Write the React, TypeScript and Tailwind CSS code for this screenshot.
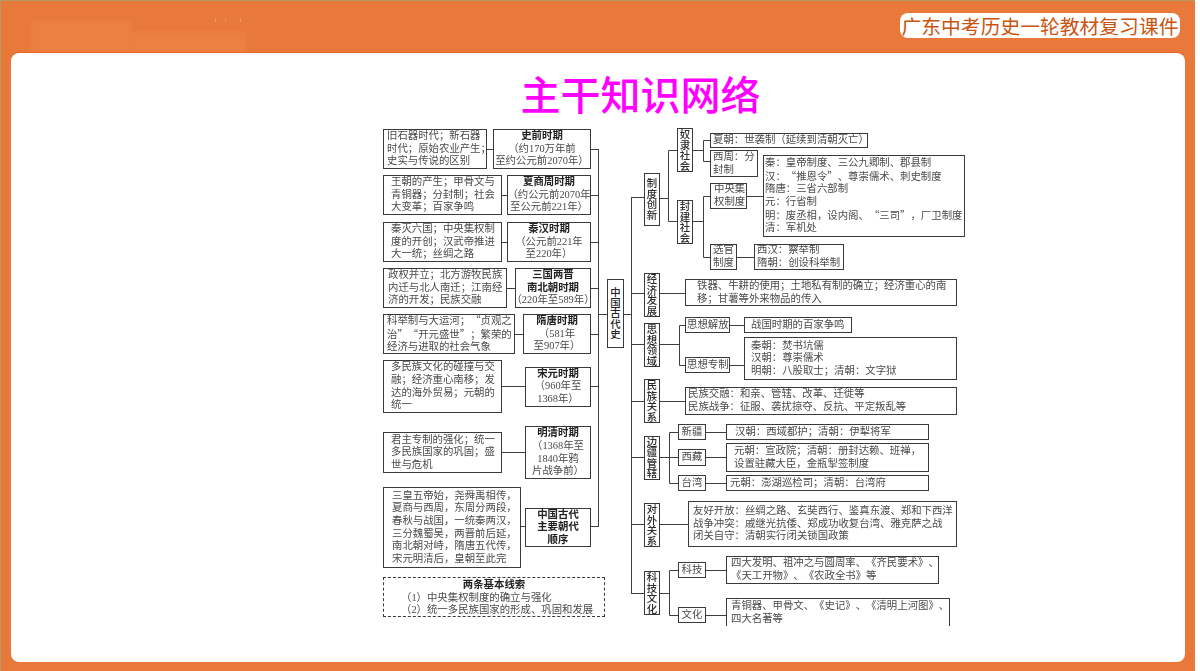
import React from "react";

function Box({ className, text, head }: { className: string; text?: string; head?: string }) {
  const parts = (text ?? "").split(/([“”])/);
  return (
    <div className={"flex shrink-0 flex-col justify-center whitespace-pre border border-[#3a3a3a] bg-white " + className}>
      {head ? <div className="font-bold text-[#222]">{head}</div> : null}
      {text ? (
        <div>
          {parts.map((p, i) =>
            p === "“" || p === "”" ? (
              <span key={i} className="font-['Noto_Sans_CJK_SC']">{p}</span>
            ) : (
              <span key={i}>{p}</span>
            )
          )}
        </div>
      ) : null}
    </div>
  );
}

function Label({ text, className = "" }: { text: string; className?: string }) {
  return (
    <div className={"flex h-[44px] w-[16px] shrink-0 items-center justify-center whitespace-pre-line border border-[#3a3a3a] bg-white text-center font-['Noto_Sans_CJK_SC',sans-serif] font-medium leading-[10.5px] text-[#2a2a2a] " + className}>
      {text}
    </div>
  );
}

function Period({ d, dc, h, t, tw, th = "h-[40px]", className = "" }: { d: string; dc: string; h: string; t?: string; tw: string; th?: string; className?: string }) {
  return (
    <div className={"flex w-[208px] items-center justify-between " + className}>
      <Box className={dc} text={d} />
      <Box className={"items-center text-center " + tw + " " + th} head={h} text={t} />
    </div>
  );
}

function Lines() {
  const d = [
    "M107 24.5H113", "M122 70.5H127", "M122 117.5H127", "M127 163.5H135", "M135 209.5H143", "M122 261.5H145", "M122 327.5H145", "M141 401.5H145",
    "M211 24.5H218.5", "M211 70.5H218.5", "M211 117.5H218.5", "M211 163.5H218.5", "M211 209.5H218.5", "M211 261.5H218.5", "M211 401.5H218.5",
    "M218.5 24V402", "M218.5 189.5H227", "M243 189.5H251.5", "M251.5 72V469",
    "M251 72.5H264", "M251 168.5H264", "M251 219.5H264", "M251 276.5H264", "M251 332.5H264", "M251 399.5H264", "M251 468.5H264",
    "M280 73.5H288.5", "M297 25.5H288.5V96.5H297", "M313 25.5H323.5", "M330 15.5H323.5V36.5H330", "M313 96.5H323.5", "M330 71.5H323.5V132.5H330",
    "M367 71.5H383", "M357 132.5H374",
    "M280 168.5H305", "M280 219.5H299.5", "M305 200.5H299.5V240.5H305", "M350 200.5H364", "M350 240.5H364", "M280 276.5H305",
    "M280 332.5H298", "M298 307.5H289.5V358.5H298", "M326 307.5H346", "M326 332.5H346", "M326 358.5H346",
    "M280 399.5H308", "M280 468.5H289.5", "M298 445.5H289.5V490.5H298", "M326 445.5H346", "M326 490.5H346",
  ];
  return (
    <svg className="absolute inset-0 h-[501px] w-[590px]" viewBox="0 0 590 501" fill="none" stroke="#3f3f3f" strokeWidth="1">
      {d.map((p, i) => (
        <path key={i} d={p} />
      ))}
    </svg>
  );
}

export default function App() {
  return (
    <div className="h-[671px] w-[1200px] overflow-hidden bg-white font-['Liberation_Serif','Noto_Sans_CJK_SC',serif]">
      <div className="relative h-[671px] w-[1195px] border-l border-t border-[#b59a62] bg-[#e8793a]">
        <div className="absolute left-[30px] top-[20px] h-[32px] w-[100px] bg-[#ec8043] blur-[2px]" />
        <div className="absolute left-[130px] top-[31px] h-[21px] w-[115px] bg-[#ec8043] blur-[2px]" />
        <div className="absolute left-[214px] top-[18px] h-[3px] w-[1px] bg-[#f09a68]" />
        <div className="absolute left-[224px] top-[18px] h-[3px] w-[1px] bg-[#f09a68]" />
        <div className="absolute left-[239px] top-[18px] h-[3px] w-[1px] bg-[#f09a68]" />
        <div className="flex h-[52px] items-start justify-end pr-[15px] pt-[12px]">
          <div className="relative h-[25px] w-[280px] rounded-[8px] bg-white text-center font-['Noto_Sans_CJK_SC',sans-serif] text-[19.8px] leading-[25px] text-[#c9540f]">
            广东中考历史一轮教材复习课件
          </div>
        </div>
        <div className="relative mx-[10px] h-[609px] rounded-[8px] bg-white shadow-[0_-1px_0_#e7651f]">
          <div className="pl-[85px] pt-[15px] text-center font-['Noto_Sans_CJK_SC',sans-serif] text-[40px] font-medium leading-[50px] text-[#ff00ff]">
            主干知识网络
          </div>
          <div className="relative ml-[369px] mt-[7px] flex h-[501px] w-[590px] overflow-hidden text-[10.4px] leading-[12.6px] text-[#4a4a4a] blur-[0.3px] [text-spacing-trim:space-all]">
            <Lines />
            <div className="relative flex flex-col pl-[3px] pt-[4px]">
              <Period d={"旧石器时代；新石器\n时代；原始农业产生；\n史实与传说的区别"} dc="h-[40px] w-[104px] pl-[3px]" h="史前时期" t={"（约170万年前\n至约公元前2070年）"} tw="w-[98px]" />
              <Period className="mt-[6px]" d={"王朝的产生；甲骨文与\n青铜器；分封制；社会\n大变革；百家争鸣"} dc="h-[40px] w-[119px] pl-[7px]" h="夏商周时期" t={"（约公元前2070年\n至公元前221年）"} tw="w-[84px]" />
              <Period className="mt-[7px]" d={"秦灭六国；中央集权制\n度的开创；汉武帝推进\n大一统；丝绸之路"} dc="h-[40px] w-[119px] pl-[7px]" h="秦汉时期" t={"（公元前221年\n至220年）"} tw="w-[84px]" />
              <Period className="mt-[6px]" d={"政权并立；北方游牧民族\n内迁与北人南迁；江南经\n济的开发；民族交融"} dc="h-[40px] w-[124px] pl-[4px]" h={"三国两晋\n南北朝时期"} t="（220年至589年）" tw="w-[76px]" />
              <Period className="mt-[6px]" d={"科举制与大运河；“贞观之\n治”“开元盛世”；繁荣的\n经济与进取的社会气象"} dc="h-[40px] w-[132px] pl-[3px]" h="隋唐时期" t={"（581年\n至907年）"} tw="w-[68px]" />
              <Period className="mt-[6px]" d={"多民族文化的碰撞与交\n融；经济重心南移；发\n达的海外贸易；元朝的\n统一"} dc="h-[53px] w-[119px] pl-[7px]" h="宋元时期" t={"（960年至\n1368年）"} tw="w-[66px]" />
              <Period className="mt-[13px]" d={"君主专制的强化；统一\n多民族国家的巩固；盛\n世与危机"} dc="h-[41px] w-[119px] pl-[7px]" h="明清时期" t={"（1368年至\n1840年鸦\n片战争前）"} tw="w-[66px]" th="h-[53px]" />
              <Period className="mt-[8px]" d={"三皇五帝始，尧舜禹相传，\n夏商与西周，东周分两段，\n春秋与战国，一统秦两汉，\n三分魏蜀吴，两晋前后延，\n南北朝对峙，隋唐五代传，\n宋元明清后，皇朝至此完"} dc="h-[81px] w-[138px] pl-[8px]" h={"中国古代\n主要朝代\n顺序"} tw="w-[66px]" th="h-[39px]" />
              <div className="mt-[9px] h-[40px] w-[222px] whitespace-pre border border-dashed border-[#3a3a3a] pl-[17px] pt-[1px]">
                <div className="pr-[17px] text-center font-semibold text-[#222]">两条基本线索</div>
                <div>（1）中央集权制度的确立与强化</div>
                <div>（2）统一多民族国家的形成、巩固和发展</div>
              </div>
            </div>

            <Box className="relative ml-[2px] mt-[154px] h-[69px] w-[17px] items-center text-center font-['Noto_Sans_CJK_SC',sans-serif] font-medium !leading-[10.4px] text-[#222]" text={"中\n国\n古\n代\n史"} />

            <div className="relative ml-[20px] flex flex-col pt-[3px]">
              <div className="flex h-[142px] items-center gap-[17px]">
                <Label text={"制\n度\n创\n新"} className="!h-[53px]" />
                <div className="flex flex-col">
                  <div className="flex items-start gap-[17px]">
                    <Label text={"奴\n隶\n社\n会"} />
                    <div className="mt-[5px] flex flex-col items-start gap-[2px]">
                      <Box className="h-[15px] w-[158px] pl-[2px]" text="夏朝：世袭制（延续到清朝灭亡）" />
                      <Box className="h-[27px] w-[48px] pl-[2px]" text={"西周：分\n封制"} />
                    </div>
                  </div>
                  <div className="-mt-[22px] flex items-start gap-[17px]">
                    <Label text={"封\n建\n社\n会"} className="mt-[45px]" />
                    <div className="flex flex-col gap-[7px]">
                      <div className="flex items-center gap-[16px]">
                        <Box className="h-[26px] w-[37px] pl-[3px]" text={"中央集\n权制度"} />
                        <Box className="h-[82px] w-[202px] pl-[1px]" text={"秦：皇帝制度、三公九卿制、郡县制\n汉：“推恩令”、尊崇儒术、刺史制度\n隋唐：三省六部制\n元：行省制\n明：废丞相，设内阁、“三司”，厂卫制度\n清：军机处"} />
                      </div>
                      <div className="flex items-center gap-[17px]">
                        <Box className="h-[26px] w-[27px] pl-[2px]" text={"选官\n制度"} />
                        <Box className="h-[26px] w-[90px] pl-[2px]" text={"西汉：察举制\n隋朝：创设科举制"} />
                      </div>
                    </div>
                  </div>
                </div>
              </div>

              <div className="mt-[3px] flex items-start gap-[25px]">
                <Label text={"经\n济\n发\n展"} />
                <Box className="mt-[6px] h-[27px] w-[272px] pl-[11px]" text={"铁器、牛耕的使用；土地私有制的确立；经济重心的南\n移；甘薯等外来物品的传入"} />
              </div>

              <div className="flex items-start gap-[25px]">
                <Label text={"思\n想\n领\n域"} className="mt-[6px]" />
                <div className="flex flex-col gap-[4px]">
                  <div className="flex items-start gap-[14px]">
                    <Box className="h-[16px] w-[45px] pl-[1px]" text="思想解放" />
                    <Box className="h-[16px] w-[108px] pl-[6px]" text="战国时期的百家争鸣" />
                  </div>
                  <div className="flex items-start gap-[14px]">
                    <Box className="mt-[20px] h-[16px] w-[45px] pl-[1px]" text="思想专制" />
                    <Box className="h-[43px] w-[213px] pl-[6px]" text={"秦朝：焚书坑儒\n汉朝：尊崇儒术\n明朝：八股取士；清朝：文字狱"} />
                  </div>
                </div>
              </div>

              <div className="-mt-[1px] flex items-center gap-[25px]">
                <Label text={"民\n族\n关\n系"} />
                <Box className="h-[28px] w-[272px] pl-[2px]" text={"民族交融：和亲、管辖、改革、迁徙等\n民族战争：征服、袭扰掠夺、反抗、平定叛乱等"} />
              </div>

              <div className="mt-[1px] flex items-center gap-[18px]">
                <Label text={"边\n疆\n管\n辖"} />
                <div className="flex flex-col gap-[3px]">
                  <div className="flex items-center gap-[20px]">
                    <Box className="h-[16px] w-[28px] items-center" text="新疆" />
                    <Box className="h-[16px] w-[203px] pl-[8px]" text="汉朝：西域都护；清朝：伊犁将军" />
                  </div>
                  <div className="flex items-center gap-[20px]">
                    <Box className="h-[17px] w-[28px] items-center" text="西藏" />
                    <Box className="h-[29px] w-[203px] pl-[7px]" text={"元朝：宣政院；清朝：册封达赖、班禅，\n设置驻藏大臣，金瓶掣签制度"} />
                  </div>
                  <div className="flex items-center gap-[20px]">
                    <Box className="h-[16px] w-[28px] items-center" text="台湾" />
                    <Box className="h-[16px] w-[203px] pl-[3px]" text="元朝：澎湖巡检司；清朝：台湾府" />
                  </div>
                </div>
              </div>

              <div className="mt-[10px] flex items-end gap-[28px]">
                <Label text={"对\n外\n关\n系"} />
                <Box className="h-[46px] w-[269px] pl-[4px]" text={"友好开放：丝绸之路、玄奘西行、鉴真东渡、郑和下西洋\n战争冲突：戚继光抗倭、郑成功收复台湾、雅克萨之战\n闭关自守：清朝实行闭关锁国政策"} />
              </div>

              <div className="mt-[9px] flex items-start gap-[18px]">
                <Label text={"科\n技\n文\n化"} className="mt-[15px]" />
                <div className="flex flex-col gap-[14px]">
                  <div className="flex items-center gap-[20px]">
                    <Box className="h-[16px] w-[28px] items-center" text="科技" />
                    <Box className="h-[28px] w-[213px] pl-[4px]" text={"四大发明、祖冲之与圆周率、《齐民要术》、\n《天工开物》、《农政全书》等"} />
                  </div>
                  <div className="flex items-start gap-[20px]">
                    <Box className="mt-[9px] h-[16px] w-[28px] items-center" text="文化" />
                    <Box className="h-[30px] w-[224px] pl-[4px]" text={"青铜器、甲骨文、《史记》、《清明上河图》、\n四大名著等"} />
                  </div>
                </div>
              </div>
            </div>
          </div>
        </div>
      </div>
    </div>
  );
}
